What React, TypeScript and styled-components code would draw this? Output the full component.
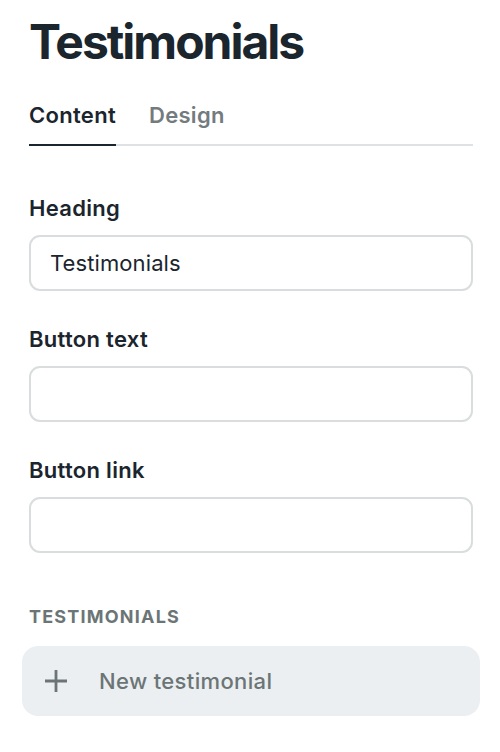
import * as React from 'react';
import styled, { createGlobalStyle } from 'styled-components';

const GlobalStyle = createGlobalStyle`
  body {
    margin: 0;
    background: #ffffff;
    font-family: Inter, 'Noto Sans', sans-serif;
    color: #1b252d;
  }
`;

const Panel = styled.div`
  display: flex;
  flex-direction: column;
  padding: 13px 27px 0 29px;
`;

const Title = styled.h1`
  margin: 0;
  font-size: 48px;
  line-height: 58px;
  font-weight: 700;
  letter-spacing: -2px;
  color: #1b252d;
`;

const Tabs = styled.div`
  display: flex;
  gap: 33px;
  margin-top: 31px;
  border-bottom: 2px solid #dfe2e5;
`;

const Tab = styled.div<{ $active?: boolean }>`
  font-size: 22px;
  font-weight: 600;
  line-height: 26px;
  letter-spacing: 0.3px;
  padding-bottom: 16px;
  margin-bottom: -2px;
  color: ${(p) => (p.$active ? '#1b252d' : '#737b7e')};
  border-bottom: 2px solid ${(p) => (p.$active ? '#1b252d' : 'transparent')};
  cursor: pointer;
`;

const Field = styled.div`
  display: flex;
  flex-direction: column;
  margin-top: 49px;
  & + & {
    margin-top: 35px;
  }
`;

const Label = styled.label`
  font-size: 22px;
  font-weight: 600;
  line-height: 26px;
  letter-spacing: 0.3px;
  color: #1b252d;
  margin-bottom: 14px;
`;

const Input = styled.input`
  box-sizing: border-box;
  height: 56px;
  padding: 0 19px;
  border: 2px solid #d9dddd;
  border-radius: 11px;
  font-family: Inter, 'Noto Sans', sans-serif;
  font-size: 22px;
  letter-spacing: 0.1px;
  color: #1b252d;
  background: #fff;
  outline: none;
`;

const SectionTitle = styled.div`
  margin-top: 53px;
  font-size: 18px;
  font-weight: 700;
  letter-spacing: 1.2px;
  line-height: 22px;
  color: #6b7576;
`;

const AddButton = styled.button`
  display: flex;
  align-items: center;
  gap: 31px;
  margin: 18px -7px 0 -7px;
  height: 70px;
  padding: 0 22px;
  border: none;
  border-radius: 16px;
  background: #eceff2;
  font-family: Inter, 'Noto Sans', sans-serif;
  font-size: 22px;
  font-weight: 500;
  letter-spacing: 0.35px;
  color: #6b7576;
  cursor: pointer;
`;

function PlusIcon(): JSX.Element {
  return (
    <svg width="24" height="24" viewBox="0 0 24 24" fill="none" stroke="#6b7576" strokeWidth="2.8">
      <path d="M12 1v22M1 12h22" />
    </svg>
  );
}

function App(): JSX.Element {
  const [tab, setTab] = React.useState<'content' | 'design'>('content');

  return (
    <>
      <GlobalStyle />
      <Panel>
        <Title>Testimonials</Title>
        <Tabs>
          <Tab $active={tab === 'content'} onClick={() => setTab('content')}>Content</Tab>
          <Tab $active={tab === 'design'} onClick={() => setTab('design')}>Design</Tab>
        </Tabs>

        <Field>
          <Label>Heading</Label>
          <Input type="text" defaultValue="Testimonials" />
        </Field>
        <Field>
          <Label>Button text</Label>
          <Input type="text" />
        </Field>
        <Field>
          <Label>Button link</Label>
          <Input type="text" />
        </Field>

        <SectionTitle>TESTIMONIALS</SectionTitle>
        <AddButton type="button">
          <PlusIcon />
          New testimonial
        </AddButton>
      </Panel>
    </>
  );
}

export default App;
